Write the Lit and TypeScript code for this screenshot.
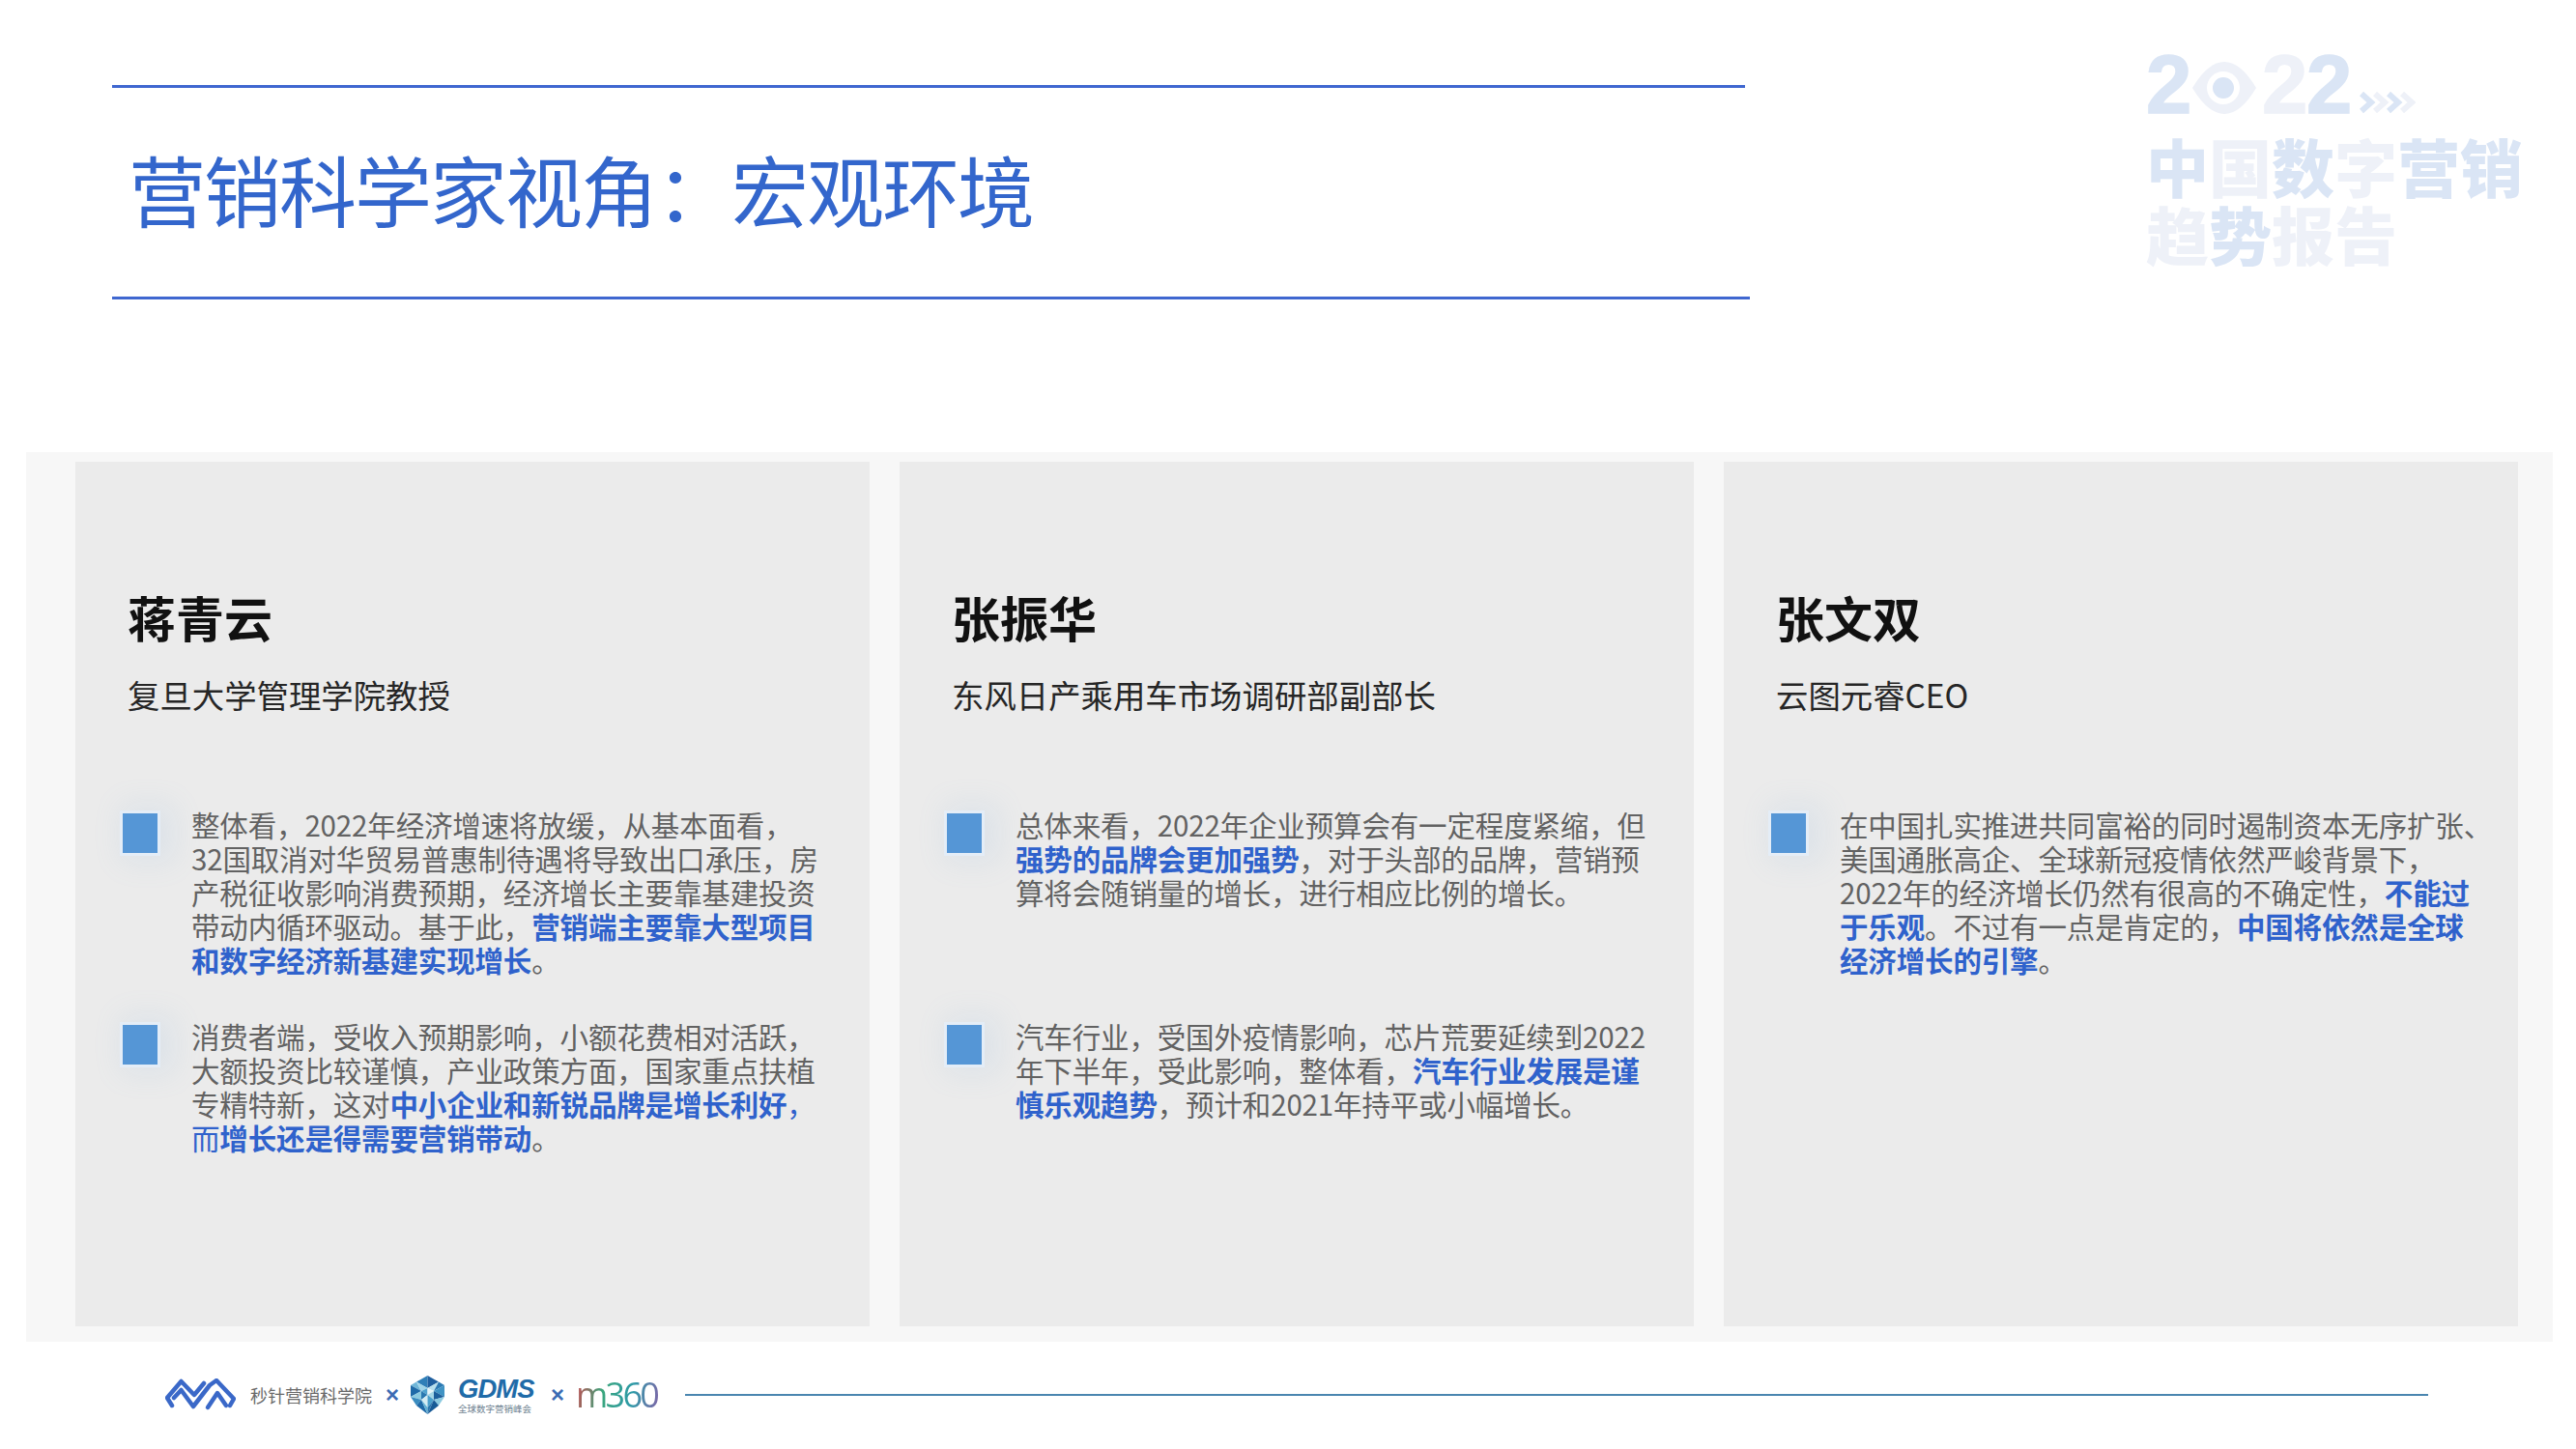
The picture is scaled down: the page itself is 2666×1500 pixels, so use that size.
import { LitElement, html, css, svg } from "lit";
import { customElement } from "lit/decorators.js";

type Seg = string | { b: string } | { c: string };
interface Person { name: string; role: string; paras: Seg[][][] }

const people: Person[] = [
  {
    name: "蒋青云",
    role: "复旦大学管理学院教授",
    paras: [
      [
        ["整体看，2022年经济增速将放缓，从基本面看，"],
        ["32国取消对华贸易普惠制待遇将导致出口承压，房"],
        ["产税征收影响消费预期，经济增长主要靠基建投资"],
        ["带动内循环驱动。基于此，", { b: "营销端主要靠大型项目" }],
        [{ b: "和数字经济新基建实现增长" }, "。"],
      ],
      [
        ["消费者端，受收入预期影响，小额花费相对活跃，"],
        ["大额投资比较谨慎，产业政策方面，国家重点扶植"],
        ["专精特新，这对", { b: "中小企业和新锐品牌是增长利好" }, { c: "，" }],
        [{ c: "而" }, { b: "增长还是得需要营销带动" }, "。"],
      ],
    ],
  },
  {
    name: "张振华",
    role: "东风日产乘用车市场调研部副部长",
    paras: [
      [
        ["总体来看，2022年企业预算会有一定程度紧缩，但"],
        [{ b: "强势的品牌会更加强势" }, "，对于头部的品牌，营销预"],
        ["算将会随销量的增长，进行相应比例的增长。"],
      ],
      [
        ["汽车行业，受国外疫情影响，芯片荒要延续到2022"],
        ["年下半年，受此影响，整体看，", { b: "汽车行业发展是谨" }],
        [{ b: "慎乐观趋势" }, "，预计和2021年持平或小幅增长。"],
      ],
    ],
  },
  {
    name: "张文双",
    role: "云图元睿CEO",
    paras: [
      [
        ["在中国扎实推进共同富裕的同时遏制资本无序扩张、"],
        ["美国通胀高企、全球新冠疫情依然严峻背景下，"],
        ["2022年的经济增长仍然有很高的不确定性，", { b: "不能过" }],
        [{ b: "于乐观" }, "。不过有一点是肯定的，", { b: "中国将依然是全球" }],
        [{ b: "经济增长的引擎" }, "。"],
      ],
    ],
  },
];

const hexTris: [string, string][] = [
  ["17.5,0 17.5,13 6,6.5", "#2f7fb8"],
  ["17.5,0 29,6.5 17.5,13", "#1f5f9f"],
  ["0,10 6,6.5 11,16", "#6fb6d8"],
  ["6,6.5 17.5,13 11,16", "#9fd4e8"],
  ["17.5,13 29,6.5 24,16", "#b7dfec"],
  ["29,6.5 35,10 24,16", "#2b79b3"],
  ["0,10 11,16 0,22", "#1f6aa8"],
  ["11,16 17.5,13 17.5,20", "#4fa3cf"],
  ["17.5,13 24,16 17.5,20", "#e8f5f9"],
  ["24,16 35,10 35,22", "#3f93c4"],
  ["0,22 11,16 11,25", "#8ccae0"],
  ["11,16 17.5,20 11,25", "#2a78b0"],
  ["24,16 24,25 17.5,20", "#a6d6e6"],
  ["24,16 35,22 24,25", "#1d5f9c"],
  ["0,22 11,25 6,31", "#3a8cc0"],
  ["11,25 17.5,20 17.5,33", "#d3ecf3"],
  ["17.5,20 24,25 17.5,33", "#4aa0cc"],
  ["24,25 35,22 29,31", "#8ccae0"],
  ["6,31 11,25 17.5,40", "#1f6aa8"],
  ["11,25 17.5,33 17.5,40", "#5fb0d4"],
  ["17.5,33 24,25 17.5,40", "#2a78b0"],
  ["24,25 29,31 17.5,40", "#175a96"],
];

const row1: [string, boolean][] = [["中", false], ["国", true], ["数", false], ["字", true], ["营", false], ["销", false]];
const row2: [string, boolean][] = [["趋", true], ["势", false], ["报", true], ["告", true]];

@customElement("app-root")
export class AppRoot extends LitElement {
  static styles = css`
    :host {
      display: block;
      width: 2666px;
      height: 1500px;
      background: #fff;
      overflow: hidden;
      font-family: "Noto Sans CJK SC", "Liberation Sans", sans-serif;
    }
    .top {
      display: flex;
      justify-content: space-between;
      height: 468px;
      box-sizing: border-box;
      padding: 88px 57px 0 116px;
    }
    .head { width: 1695px; }
    .rule1 { width: 1690px; height: 3px; background: #3f67d0; }
    .rule2 { width: 1695px; height: 3px; background: #3f67d0; }
    .title {
      height: 216px;
      box-sizing: border-box;
      padding: 0 0 11px 17px;
      display: flex;
      align-items: center;
      font-size: 80px;
      font-weight: 400;
      color: #3366cc;
      white-space: nowrap;
      letter-spacing: -2px;
    }
    .brand {
      width: 388px;
      margin-top: -31px;
      font-weight: 900;
      font-size: 65px;
      line-height: 70px;
      color: #dae5f5;
      white-space: nowrap;
    }
    .row { display: flex; height: 70px; }
    .year { display: flex; align-items: flex-end; height: 62px; margin-bottom: 17px; }
    .digit {
      font-size: 85px;
      line-height: 62px;
      width: 46px;
      font-family: "Liberation Sans", sans-serif;
      font-weight: 700;
      -webkit-text-stroke: 1.5px currentColor;
    }
    .eye { margin: 0 6px 0 2px; flex: none; }
    .pale { color: #eef1f8; }
    .arrows { margin-left: 9px; margin-bottom: 2px; flex: none; }
    .panel {
      height: 921px;
      margin: 0 24px 0 27px;
      box-sizing: border-box;
      padding: 10px 36px 16px 51px;
      background: #f7f7f7;
      display: flex;
      gap: 31px;
    }
    .card {
      flex: 1;
      background: #ebebeb;
      box-sizing: border-box;
      padding: 127px 0 0 54px;
      white-space: nowrap;
    }
    .name { font-size: 50px; line-height: 66px; font-weight: 700; color: #111; }
    .role {
      font-size: 33.4px;
      line-height: 48px;
      margin-top: 24px;
      font-weight: 400;
      color: #262626;
    }
    .paras { margin-top: 93px; margin-left: -5px; }
    .para { display: flex; height: 219px; }
    .mark {
      width: 36px;
      height: 41px;
      margin: 6px 35px 0 0;
      flex: none;
      background: #5596d6;
      box-shadow: 0 0 0 3px #e4edf7, 8px 0 30px 10px rgba(120, 170, 225, 0.12);
    }
    .text {
      font-size: 29.5px;
      line-height: 35px;
      color: #626262;
      font-weight: 400;
      letter-spacing: -0.15px;
    }
    b { color: #2f62cc; font-weight: 700; }
    .blue { color: #2f62cc; }
    .foot {
      height: 111px;
      display: flex;
      align-items: center;
      padding: 0 153px 0 171px;
      margin-top: -1px;
      box-sizing: border-box;
    }
    .wave { flex: none; }
    .ms { font-size: 18px; color: #6a6a6a; margin-left: 15px; white-space: nowrap; }
    .x1, .x2 { color: #3c6cb4; font-size: 24px; font-weight: 700; font-family: "Liberation Sans", sans-serif; }
    .x1 { margin: 0 12px 0 14px; }
    .x2 { margin: 0 12px 0 12px; }
    .hex { flex: none; }
    .gdms { margin-left: 14px; display: flex; flex-direction: column; width: 84px; }
    .gd {
      font-family: "Liberation Sans", sans-serif;
      font-style: italic;
      font-weight: 700;
      font-size: 27.5px;
      line-height: 28px;
      letter-spacing: -1px;
      color: #1f6ba8;
    }
    .gs { font-size: 9.5px; line-height: 12px; color: #6d7f90; white-space: nowrap; }
    .m360 {
      font-family: "Open Sans", "Liberation Sans", sans-serif;
      font-size: 36px;
      font-weight: 400;
      line-height: 44px;
      letter-spacing: -2.75px;
      padding-right: 4px;
      flex: none;
      background: linear-gradient(100deg, #d0454f 0%, #3aa67c 32%, #2e9aa8 65%, #8a5fa8 100%);
      -webkit-background-clip: text;
      background-clip: text;
      color: transparent;
    }
    .footline { flex: 1; height: 2px; margin-left: 25px; background: #4a86b0; }
  `;

  private line(segs: Seg[]) {
    return html`<div>${segs.map((s) => {
      if (typeof s === "string") return s;
      if ("b" in s) return html`<b>${s.b}</b>`;
      return html`<span class="blue">${s.c}</span>`;
    })}</div>`;
  }

  private chars(row: [string, boolean][]) {
    return html`<div class="row">${row.map(([c, pale]) => html`<span class=${pale ? "pale" : ""}>${c}</span>`)}</div>`;
  }

  private brand() {
    return html`<div class="brand">
      <div class="year">
        <span class="digit">2</span>
        <svg class="eye" width="66" height="56" viewBox="0 0 66 56">
          <path d="M0 28 Q16 1 33 1 Q50 1 66 28 Q50 55 33 55 Q16 55 0 28Z" fill="#eef1f8" />
          <circle cx="32" cy="28" r="17" fill="#fff" />
          <circle cx="32" cy="28" r="11" fill="#dae5f5" />
        </svg>
        <span class="digit pale">2</span>
        <span class="digit">2</span>
        <svg class="arrows" width="58" height="22" viewBox="0 0 58 22" fill="none" stroke-width="6">
          <path d="M2 2l10 9-10 9" stroke="#dae5f5" />
          <path d="M16 2l10 9-10 9" stroke="#eef1f8" />
          <path d="M30 2l10 9-10 9" stroke="#dae5f5" />
          <path d="M44 2l10 9-10 9" stroke="#eef1f8" />
        </svg>
      </div>
      ${this.chars(row1)}
      ${this.chars(row2)}
    </div>`;
  }

  render() {
    return html`
      <div class="top">
        <div class="head">
          <div class="rule1"></div>
          <div class="title">营销科学家视角：宏观环境</div>
          <div class="rule2"></div>
        </div>
        ${this.brand()}
      </div>
      <div class="panel">
        ${people.map(
          (p) => html`<div class="card">
            <div class="name">${p.name}</div>
            <div class="role">${p.role}</div>
            <div class="paras">
              ${p.paras.map(
                (para) => html`<div class="para">
                  <div class="mark"></div>
                  <div class="text">${para.map((l) => this.line(l))}</div>
                </div>`
              )}
            </div>
          </div>`
        )}
      </div>
      <div class="foot">
        <svg class="wave" width="73" height="34" viewBox="0 0 73 34" fill="none" stroke="#3a68c8" stroke-width="4.5" stroke-linejoin="round" stroke-linecap="round">
          <path d="M7 28L2 20L16.5 3L30 17L40 5" />
          <path d="M9 20L16.5 12L29 29L46 7L53 2L71 21L67 28" />
          <path d="M44 30L54 15L63 28" />
        </svg>
        <span class="ms">秒针营销科学院</span>
        <span class="x1">×</span>
        <svg class="hex" width="35" height="40" viewBox="0 0 35 40">
          ${hexTris.map(([pts, c]) => svg`<polygon points=${pts} fill=${c} />`)}
        </svg>
        <div class="gdms">
          <span class="gd">GDMS</span>
          <span class="gs">全球数字营销峰会</span>
        </div>
        <span class="x2">×</span>
        <span class="m360">m360</span>
        <div class="footline"></div>
      </div>
    `;
  }
}
